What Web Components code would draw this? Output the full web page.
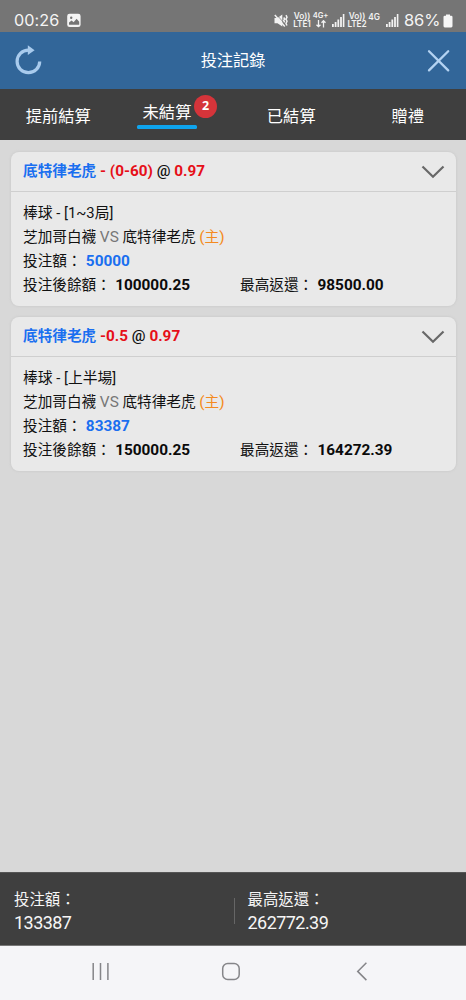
<!DOCTYPE html>
<html lang="zh-Hant">
<head>
<meta charset="utf-8">
<title>投注記錄</title>
<style>
html,body{margin:0;height:100%;overflow:hidden}
body{background:#d8d8d8;font-family:Roboto,"Noto Sans CJK TC",sans-serif}
</style>
</head>
<body>
<bet-app></bet-app>
<script>
const define=(name,html,init)=>customElements.define(name,class extends HTMLElement{
  constructor(){super();this.attachShadow({mode:'open'}).innerHTML=html;}
  connectedCallback(){if(init)init(this,this.shadowRoot);}
});

define('signal-bars',`<style>:host{display:block;width:13px;height:13px}svg{display:block}</style>
<svg width="13" height="13" viewBox="0 0 13 13" fill="#f2f2f2"><path d="M0 10h1.8v3H0zM2.7 8h1.8v5H2.7zM5.4 5.5h1.8V13H5.4zM8.1 3h1.8v10H8.1zM10.8 0h1.6v13h-1.6z"/></svg>`);

define('net-label',`<style>:host{display:flex;flex-direction:column;align-items:center;font:600 8.3px/8px Inter,sans-serif;color:#f2f2f2;height:18px;white-space:nowrap;letter-spacing:-.1px}</style><slot></slot>`);

define('status-bar',`<style>
:host{display:flex;height:32px;background:#757575;color:#f4f4f4;box-sizing:border-box;padding:8px 13px 0 14px;font-family:Inter,sans-serif;align-items:flex-start}
.time{font-size:16.2px;line-height:24px;width:53px;letter-spacing:.05px}
.pic{margin-top:5px}
.right{margin-left:auto;display:flex;align-items:flex-start}
.pct{font-size:16.5px;line-height:24px;width:38px;margin-left:5px;margin-right:1px;letter-spacing:-.1px}
svg{display:block}
net-label{margin-top:4px}
signal-bars{margin-top:6px}
</style>
<span class="time">00:26</span>
<svg class="pic" width="14" height="15" viewBox="0 0 14 15"><rect x=".2" y=".7" width="13.4" height="13.4" rx="2.4" fill="#f4f4f4"/><circle cx="4.2" cy="4.8" r="1.2" fill="#757575"/><path d="M2 11.8V9.5l2.6-2 2 1.7 3-3.5 2.6 3v3.1z" fill="#757575"/></svg>
<div class="right">
<svg style="margin-top:6px" width="14" height="13" viewBox="0 0 14 13"><path d="M.5 4h3L8.300.5v12L3.500 9.200H.5z" fill="#f2f2f2"/><path d="M2.800.8l8.500 9.700" stroke="#757575" stroke-width=".7"/><path d="M.8 1l10 11.400" stroke="#f2f2f2" stroke-width="1.500"/><path d="M9.700 3.500l1 1.500-1 1.500 1 1.800M12 1.200l1 2-1 2 1 2-1 2.300 1 2" fill="none" stroke="#f2f2f2" stroke-width="1.500"/></svg>
<net-label style="margin-left:5px;width:18px"><span>Vo))</span><span>LTE1</span></net-label>
<net-label style="margin-left:2px;width:15px"><span style="font-size:7.600px">4G+</span><svg width="10" height="8" viewBox="0 0 10 8" fill="none" stroke="#f2f2f2" stroke-width="1.3"><path d="M2.5 0v6.5M.5 4.7l2 2 2-2M7.5 7.5V1M5.5 2.7l2-2 2 2"/></svg></net-label>
<signal-bars style="margin-left:4px"></signal-bars>
<net-label style="margin-left:3px;width:18px"><span>Vo))</span><span>LTE2</span></net-label>
<net-label style="margin:5px 0 0 3px;width:10px"><span>4G</span></net-label>
<signal-bars style="margin-left:7px"></signal-bars>
<span class="pct">86%</span>
<svg style="margin-top:6px" width="10" height="14" viewBox="0 0 10 14"><path d="M3 .5h4v1.3h1.2q1.3 0 1.3 1.3v9q0 1.3-1.3 1.3H1.8Q.5 13.4.5 12V3.100q0-1.300 1.300-1.300H3z" fill="#f6f6f6"/></svg>
</div>`);

define('title-bar',`<style>
:host{display:grid;grid-template-columns:30px 1fr 30px;align-items:center;height:57px;padding:0 13px;background:#326699;color:#fff;font-size:16.2px;text-align:center}
svg{display:block}
span{padding-bottom:3px}
</style>
<svg width="30" height="32" viewBox="13 44.500 30 32"><path d="M39.700 60.900A11.300 11.300 0 1 1 28.400 49.600" fill="none" stroke="#a9cbed" stroke-width="3.200"/><path d="M27.800 44.800l6.800 5-6.800 4.800z" fill="#a9cbed"/></svg>
<span>投注記錄</span>
<svg width="30" height="30" viewBox="0 0 30 30"><path d="M6 5.200l19.200 19.200M25.200 5.200L6 24.400" stroke="#b4d3f2" stroke-width="2.300" stroke-linecap="round"/></svg>`);

define('nav-tab',`<style>
:host{display:flex;justify-content:center;align-items:flex-start;color:#fff;font-size:16.300px;line-height:24px;padding-top:15.500px}
div{position:relative;white-space:nowrap}
.badge{display:none}
:host([count]){padding-top:12px;padding-right:15.500px}
:host([count]) div{padding:0 5.700px 4px}
:host([count]) div::after{content:"";position:absolute;left:0;right:0;top:24px;height:4px;border-radius:1.500px;background:#0fa4ed}
:host([count]) .badge{display:block;position:absolute;left:57px;top:-6.500px;width:23.500px;height:23.500px;border-radius:50%;background:#d5343a;text-align:center;font:700 12.500px/22px "Open Sans",sans-serif}
</style><div><slot></slot><span class="badge"></span></div>`,(el,r)=>{if(el.hasAttribute('count'))r.querySelector('.badge').textContent=el.getAttribute('count');});

define('tab-bar',`<style>:host{display:grid;grid-template-columns:repeat(4,1fr);height:51px;background:#3f3f3f}</style><slot></slot>`);

define('bet-card',`<style>
:host{display:block;border-radius:8px;background:#e9e9e9;box-shadow:0 0 2px 1px #cecece;color:#111;font-size:14.650px;height:153.500px;overflow:hidden}
header{display:flex;align-items:center;justify-content:space-between;box-sizing:border-box;height:40px;border-bottom:1px solid #cfcfcf;padding:0 11px 0 12px;font-weight:700}
header>span{font-size:15.300px;white-space:pre;padding-bottom:4px}
svg{display:block}
.team{font-size:14.650px}
.blue{color:#1a6ff0}.red{color:#e60f18}.at{font-weight:500}
main{padding:8.800px 12px}
main>div{height:24.100px;line-height:24.100px;white-space:pre}
b{font-size:15.350px;color:#0b0b0b;margin-left:4.300px}
b.blue{color:#1a6ff0}
.vs,.home{font-size:15.400px}
.home i{font-style:normal;font-size:14.650px}
.kind{font-size:14.800px}
.vs{color:#777}.home{color:#f48a20}
.row{display:grid;grid-template-columns:217px 1fr}
</style>
<header><span><span class="team blue">底特律老虎</span> <span class="red line"></span> <span class="at">@</span> <span class="red">0.97</span></span>
<svg width="24" height="14" viewBox="0 0 24 14"><path d="M1.500 1.500L12 11.800 22.500 1.500" fill="none" stroke="#686868" stroke-width="2.200"/></svg></header>
<main><div class="kind"></div><div>芝加哥白襪 <span class="vs">VS</span> 底特律老虎 <span class="home">(<i>主</i>)</span></div><div>投注額：<b class="blue stake"></b></div><div class="row"><span>投注後餘額：<b class="balance"></b></span><span>最高返還：<b class="payout"></b></span></div></main>`,
(el,r)=>{for(const k of ['line','kind','stake','balance','payout'])r.querySelector('.'+k).textContent=el.getAttribute(k);});

define('total-bar',`<style>
:host{display:grid;grid-template-columns:233.500px 1fr;align-items:center;height:74px;box-sizing:border-box;background:#3f3f3f;border-top:1px solid #555;border-bottom:1px solid #777;color:#f6f6f6;padding:5px 0 0 0}
div{padding-left:14px;font-size:15.400px;line-height:23px}
div+div{position:relative}
div+div::before{content:"";position:absolute;left:0;top:9px;width:1px;height:26px;background:#666}
span{display:block;font-size:18px;letter-spacing:-.55px;line-height:21px;padding-bottom:2px}
</style><div>投注額：<span>133387</span></div><div>最高返還：<span>262772.39</span></div>`);

define('system-nav',`<style>:host{display:block;height:54px;background:#f5f5f8}svg{display:block}</style>
<svg width="466" height="54" viewBox="0 946 466 54" fill="none" stroke="#858589" stroke-width="1.500"><path d="M93.200 963v17M100.500 963v17M107.900 963v17"/><rect x="222.700" y="963.500" width="16.500" height="16" rx="5"/><path d="M366.400 962.700l-8.700 8.700 8.700 8.700"/></svg>`);

define('bet-app',`<style>
:host{display:flex;flex-direction:column;height:1000px;width:466px}
.list{flex:1;display:flex;flex-direction:column;gap:11.700px;padding:12px 10.500px 0 11px;background:#d8d8d8}
</style>
<status-bar></status-bar><title-bar></title-bar>
<tab-bar><nav-tab>提前結算</nav-tab><nav-tab count="2">未結算</nav-tab><nav-tab>已結算</nav-tab><nav-tab>贈禮</nav-tab></tab-bar>
<div class="list">
<bet-card line="- (0-60)" kind="棒球 - [1~3局]" stake="50000" balance="100000.25" payout="98500.00"></bet-card>
<bet-card line="-0.5" kind="棒球 - [上半場]" stake="83387" balance="150000.25" payout="164272.39"></bet-card>
</div>
<total-bar></total-bar><system-nav></system-nav>`);
</script>
</body>
</html>
